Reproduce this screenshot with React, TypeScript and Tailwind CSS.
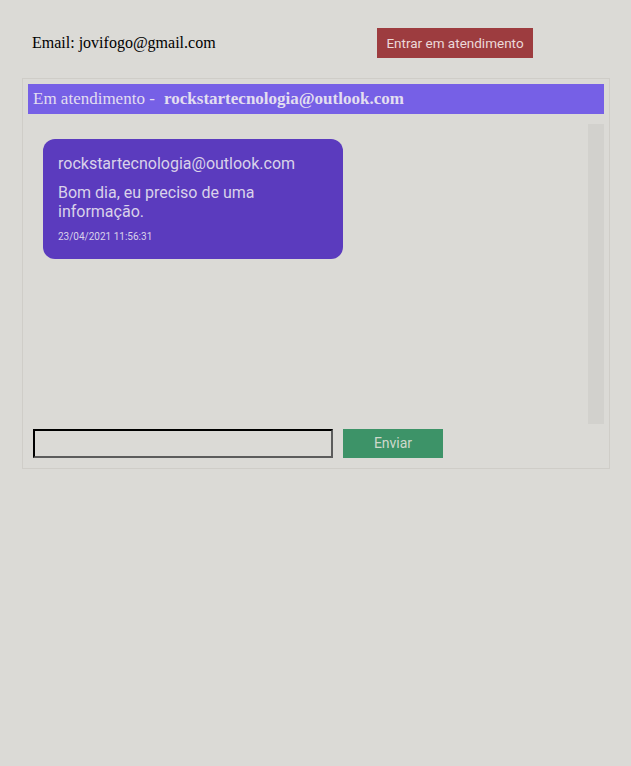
// Tela de atendimento (chat) com uma mensagem recebida.

const mensagens = [
  {
    id: 1,
    autor: 'rockstartecnologia@outlook.com',
    texto: 'Bom dia, eu preciso de uma informação.',
    data: '23/04/2021 11:56:31',
  },
];

export default function App() {
  return (
    <div className="min-h-screen bg-[#dbdad6] font-['Liberation_Serif',serif] text-black">
      {/* Topo */}
      <div className="flex items-center pt-[28px] pl-[32px]">
        <span className="w-[345px] text-[16px]">Email: jovifogo@gmail.com</span>
        <button className="h-[30px] w-[156px] bg-[#9d3c3f] font-['Roboto',sans-serif] text-[13.5px] text-[#ecd9d9]">
          Entrar em atendimento
        </button>
      </div>

      {/* Painel do atendimento */}
      <div className="mt-[20px] ml-[22px] w-[588px] border border-[#cfcdc8] p-[5px] pb-[10px]">
        <div className="flex h-[30px] items-center bg-[#7660e6] px-[5px] text-[17px] text-[#e2def0]">
          <span>Em atendimento -&nbsp;</span>
          <span className="ml-[5px] font-bold">rockstartecnologia@outlook.com</span>
        </div>

        <div className="mt-[10px] flex h-[300px]">
          <div className="flex-1 p-[15px]">
            {mensagens.map(m => (
              <div
                key={m.id}
                className="h-[120px] w-[300px] rounded-[12px] bg-[#5b3bbe] px-[15px] pt-[15px] font-['Roboto',sans-serif] text-[#d9d2ea]"
              >
                <p className="text-[16px] leading-[20px]">{m.autor}</p>
                <p className="mt-[9px] text-[16px] leading-[19px]">{m.texto}</p>
                <p className="mt-[8px] text-[10px]">{m.data}</p>
              </div>
            ))}
          </div>
          <div className="w-[16px] bg-[#d2d1cd]" />
        </div>

        <div className="mt-[5px] flex gap-[10px] px-[5px]">
          <input
            type="text"
            className="h-[29px] w-[300px] border-2 border-t-black border-l-black border-b-[#5c5c5c] border-r-[#5c5c5c] bg-transparent outline-none"
          />
          <button className="h-[29px] w-[100px] bg-[#3d9368] font-['Roboto',sans-serif] text-[14px] text-[#cfd9cc]">
            Enviar
          </button>
        </div>
      </div>
    </div>
  );
}
